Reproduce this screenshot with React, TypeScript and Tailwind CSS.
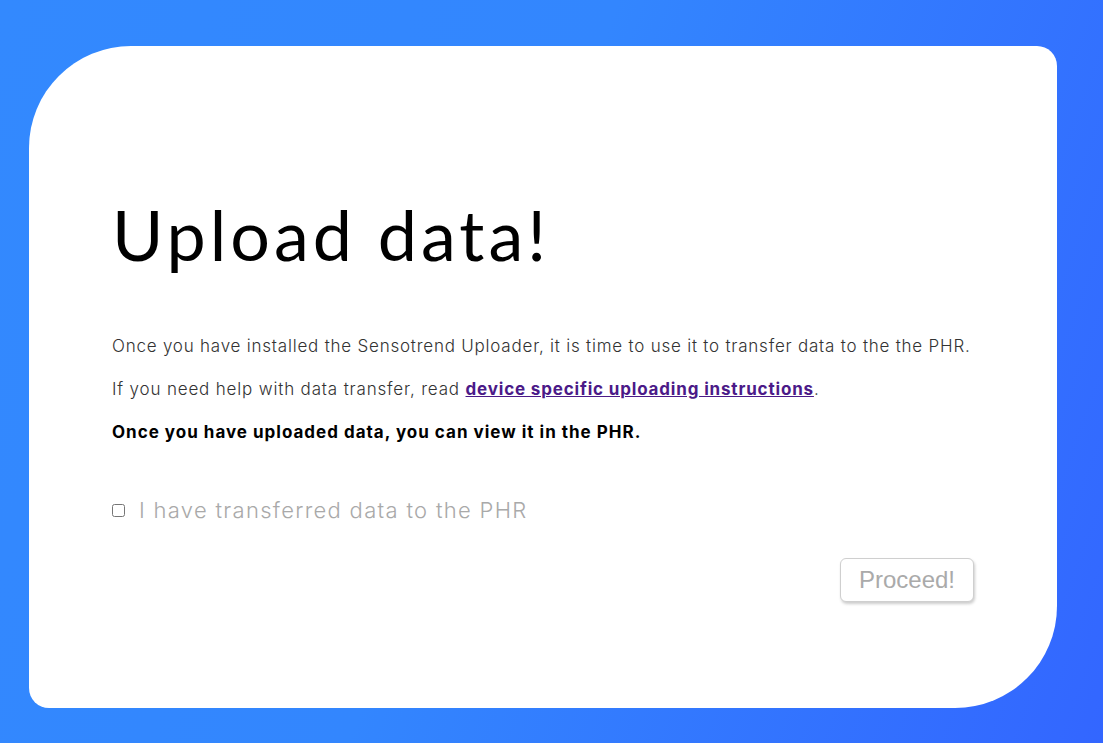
import { useState } from "react";

export default function App() {
  const [done, setDone] = useState(false);

  return (
    <div className="flex h-[743px] w-full bg-[linear-gradient(110deg,#3389fe_0%,#3386fe_45%,#3366ff_100%)] pb-[35px] pl-[29px] pr-[46px] pt-[46px]">
      <div className="flex flex-1 flex-col rounded-bl-[20px] rounded-br-[102px] rounded-tl-[102px] rounded-tr-[20px] bg-white px-[83px] pt-[148px] font-['Inter',sans-serif]">
        <h1 className="font-['Lato',sans-serif] text-[70px] leading-[80px] tracking-[4px] text-black">Upload data!</h1>

        <p className="mt-[60px] whitespace-nowrap text-[17px] font-light leading-[24px] tracking-[0.78px] text-[#333]">
          Once you have installed the Sensotrend Uploader, it is time to use it to transfer data to the the PHR.
        </p>
        <p className="mt-[19px] text-[17px] font-light leading-[24px] tracking-[0.83px] text-[#333]">
          If you need help with data transfer, read{" "}
          <a href="#" className="font-bold text-[#4b1a88] underline">
            device specific uploading instructions
          </a>
          .
        </p>
        <p className="mt-[19px] text-[17px] font-bold leading-[24px] tracking-[1px] text-black">
          Once you have uploaded data, you can view it in the PHR.
        </p>

        <label className="mt-[51px] flex items-center gap-[14px] text-[22px] font-light leading-[30px] tracking-[1.3px] text-[#a9a9a9]">
          <input
            type="checkbox"
            checked={done}
            onChange={(e) => setDone(e.target.checked)}
            className="h-[13px] w-[13px]"
          />
          I have transferred data to the PHR
        </label>

        <div className="mt-[33px] flex justify-end">
          <button
            disabled={!done}
            className="h-[44px] rounded-[6px] border border-[#cfcfcf] bg-white px-[18px] font-['Liberation_Sans',sans-serif] text-[24px] text-[#aaa] shadow-[1px_2px_3px_rgba(0,0,0,0.2)]"
          >
            Proceed!
          </button>
        </div>
      </div>
    </div>
  );
}
